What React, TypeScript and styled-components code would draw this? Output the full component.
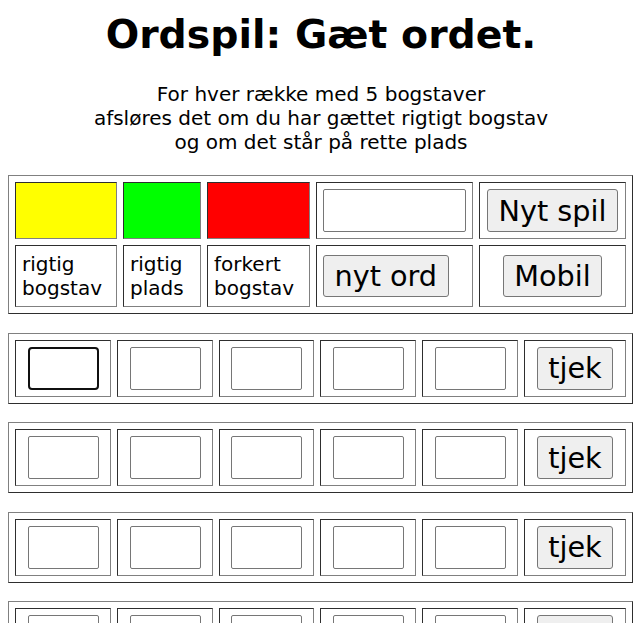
import React from "react";
import styled, { createGlobalStyle } from "styled-components";

const GlobalStyle = createGlobalStyle`
  html, body {
    margin: 0;
    padding: 0;
    background: #ffffff;
  }
  body {
    font-family: "DejaVu Sans", Verdana, sans-serif;
    font-size: 16px;
    color: #000000;
  }
`;

const Page = styled.div`
  padding: 0 8px;
`;

const Title = styled.h1`
  margin: 11px 0 0;
  font-size: 39.4px;
  font-weight: bold;
  text-align: center;
`;

const Intro = styled.p`
  margin: 25px 0 0;
  font-size: 20px;
  text-align: center;
`;

const Boards = styled.div`
  margin-top: 21px;
  display: flex;
  flex-direction: column;
  gap: 18.5px;
`;

const Panel = styled.div<{ $cols: string; $rows: string }>`
  box-sizing: border-box;
  width: 625px;
  padding: 6px;
  border: 1px solid;
  border-color: #808080 #2e2e2e #2e2e2e #808080;
  display: grid;
  grid-template-columns: ${(p) => p.$cols};
  grid-template-rows: ${(p) => p.$rows};
  gap: 6px;
`;

const Cell = styled.div<{ $bg?: string; $align?: "start" | "center" }>`
  box-sizing: border-box;
  padding: 6px;
  border: 1px solid;
  border-color: #2e2e2e #808080 #808080 #2e2e2e;
  background: ${(p) => p.$bg ?? "transparent"};
  display: flex;
  align-items: center;
  justify-content: ${(p) => (p.$align === "start" ? "flex-start" : "center")};
  font-size: 20px;
  line-height: normal;
`;

const Legend = styled.span`
  font-size: 20px;
`;

const Button = styled.button<{ $h?: number }>`
  box-sizing: border-box;
  height: ${(p) => p.$h ?? 43}px;
  padding: 0 10.5px;
  font-family: "DejaVu Sans", Verdana, sans-serif;
  font-size: 28.7px;
  color: #000000;
  background: #efefef;
  border: 1px solid #767676;
  border-radius: 3px;
  white-space: nowrap;
`;

const WordInput = styled.input`
  box-sizing: border-box;
  width: 143px;
  height: 43px;
  border: 1px solid #767676;
  border-radius: 2px;
  background: #ffffff;
  padding: 0;
`;

const LetterBox = styled.input<{ $focused?: boolean }>`
  box-sizing: border-box;
  width: 71px;
  height: 43px;
  padding: 0;
  background: #ffffff;
  border: ${(p) => (p.$focused ? "2px solid #101010" : "1px solid #767676")};
  border-radius: ${(p) => (p.$focused ? "4px" : "2px")};
  outline: none;
`;

const GuessRow: React.FC<{ first?: boolean }> = ({ first }) => (
  <Panel $cols="96px 96px 95px 96px 96px 102px" $rows="57px">
    {[0, 1, 2, 3, 4].map((i) => (
      <Cell key={i}>
        <LetterBox readOnly $focused={first && i === 0} />
      </Cell>
    ))}
    <Cell>
      <Button>tjek</Button>
    </Cell>
  </Panel>
);

export default function App() {
  return (
    <>
      <GlobalStyle />
      <Page>
        <Title>Ordspil: Gæt ordet.</Title>
        <Intro>
          For hver række med 5 bogstaver
          <br />
          afsløres det om du har gættet rigtigt bogstav
          <br />
          og om det står på rette plads
        </Intro>
        <Boards>
          <Panel $cols="102px 78px 103px 157px 147px" $rows="57px 62px">
            <Cell $bg="#ffff00" />
            <Cell $bg="#00ff00" />
            <Cell $bg="#ff0000" />
            <Cell $align="start">
              <WordInput readOnly />
            </Cell>
            <Cell>
              <Button>Nyt spil</Button>
            </Cell>
            <Cell $align="start">
              <Legend>
                rigtig
                <br />
                bogstav
              </Legend>
            </Cell>
            <Cell $align="start">
              <Legend>
                rigtig
                <br />
                plads
              </Legend>
            </Cell>
            <Cell $align="start">
              <Legend>
                forkert
                <br />
                bogstav
              </Legend>
            </Cell>
            <Cell $align="start">
              <Button $h={42}>nyt ord</Button>
            </Cell>
            <Cell>
              <Button $h={42}>Mobil</Button>
            </Cell>
          </Panel>
          {[0, 1, 2, 3, 4, 5].map((i) => (
            <GuessRow key={i} first={i === 0} />
          ))}
        </Boards>
      </Page>
    </>
  );
}
